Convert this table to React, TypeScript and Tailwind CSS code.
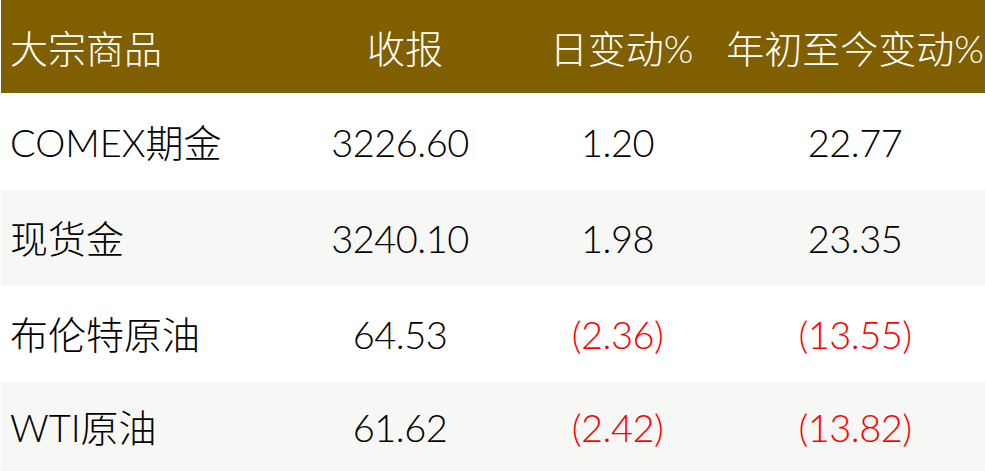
import React from "react";

const rows = [
  { name: "COMEX期金", close: "3226.60", day: "1.20", ytd: "22.77", neg: false, bg: "bg-white", h: "h-[97px]" },
  { name: "现货金", close: "3240.10", day: "1.98", ytd: "23.35", neg: false, bg: "bg-[#f7f7f5]", h: "h-[96px]" },
  { name: "布伦特原油", close: "64.53", day: "(2.36)", ytd: "(13.55)", neg: true, bg: "bg-white", h: "h-[96px]" },
  { name: "WTI原油", close: "61.62", day: "(2.42)", ytd: "(13.82)", neg: true, bg: "bg-[#f7f7f5]", h: "h-[89px]" },
];

export default function App() {
  return (
    <div
      className="w-[985px] h-[471px] bg-white overflow-hidden pl-px text-[38px] leading-none font-light"
      style={{ fontFamily: '"Lato", "Noto Sans CJK SC", sans-serif' }}
    >
      <div className="flex h-[93px] items-center bg-[#7f5f00] text-white pt-[3px]">
        <div className="w-[289px] pl-[9px]">大宗商品</div>
        <div className="w-[220px] text-center pl-[10px]">收报</div>
        <div className="w-[215px] text-center pl-[8px]">日变动%</div>
        <div className="flex-1 text-center whitespace-nowrap">年初至今变动%</div>
      </div>
      {rows.map((r) => (
        <div key={r.name} className={`flex items-center ${r.h} ${r.bg} text-black`}>
          <div className="w-[289px] pl-[9px]">{r.name}</div>
          <div className="w-[220px] text-center tracking-[-0.5px]">{r.close}</div>
          <div className={`w-[215px] text-center tracking-[-0.5px] ${r.neg ? "text-[#ff0000]" : ""}`}>{r.day}</div>
          <div className={`flex-1 text-center tracking-[-0.5px] ${r.neg ? "text-[#ff0000]" : ""}`}>{r.ytd}</div>
        </div>
      ))}
    </div>
  );
}
